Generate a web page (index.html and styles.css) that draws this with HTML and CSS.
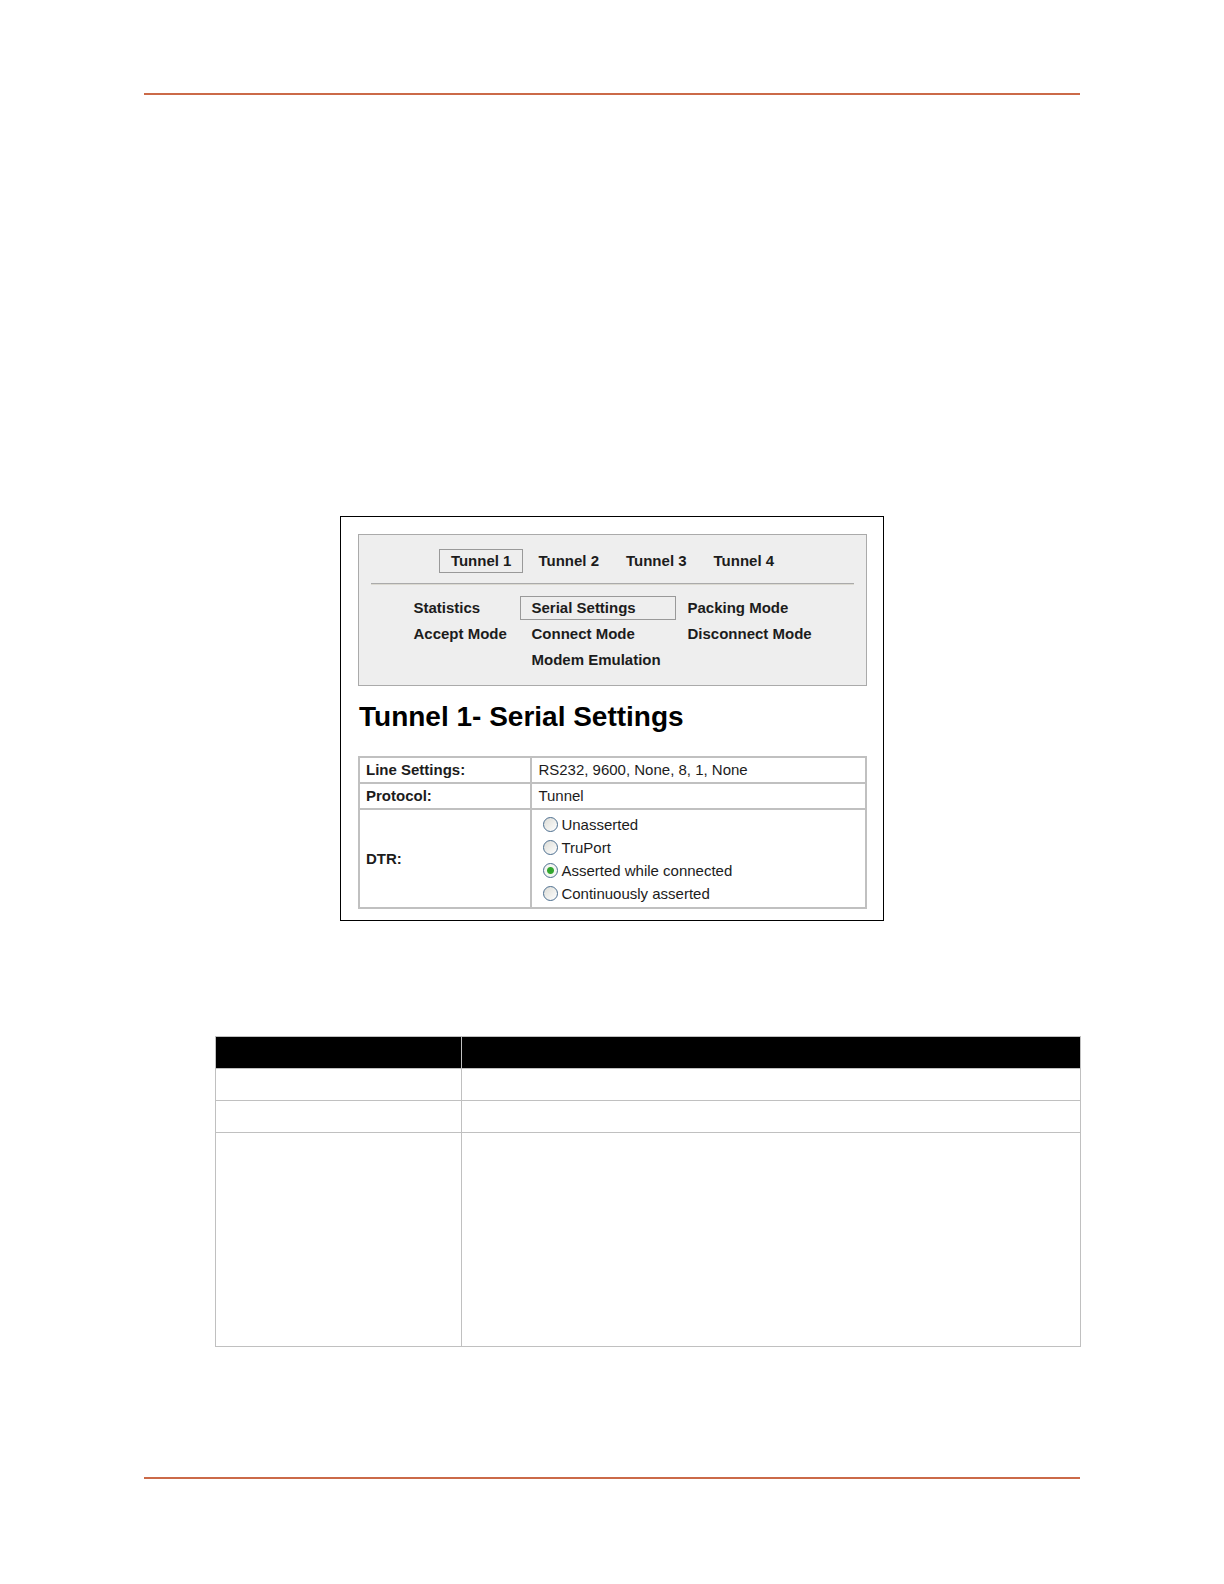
FILE: index.html
```
<!DOCTYPE html>
<html lang="en">
<head>
  <meta charset="UTF-8">
  <meta name="viewport" content="width=device-width, initial-scale=1.0">
  <title>Tunnel 1 - Serial Settings</title>
  <link rel="stylesheet" href="styles.css">
</head>
<body>
  <main class="page">
    <section class="screen">
      <nav class="menu">
        <div class="tunnels">
          <a class="active" href="#tunnel1">Tunnel 1</a>
          <a href="#tunnel2">Tunnel 2</a>
          <a href="#tunnel3">Tunnel 3</a>
          <a href="#tunnel4">Tunnel 4</a>
        </div>
        <hr>
        <div class="modes">
          <a href="#statistics">Statistics</a>
          <a class="active" href="#serial">Serial Settings</a>
          <a href="#packing">Packing Mode</a>
          <a href="#accept">Accept Mode</a>
          <a href="#connect">Connect Mode</a>
          <a href="#disconnect">Disconnect Mode</a>
          <a class="second" href="#modem">Modem Emulation</a>
        </div>
      </nav>

      <h1>Tunnel 1- Serial Settings</h1>

      <table class="settings">
        <tr>
          <th scope="row">Line Settings:</th>
          <td>RS232, 9600, None, 8, 1, None</td>
        </tr>
        <tr>
          <th scope="row">Protocol:</th>
          <td>Tunnel</td>
        </tr>
        <tr>
          <th scope="row" id="dtr">DTR:</th>
          <td>
            <div class="options" role="radiogroup" aria-labelledby="dtr">
              <label><input type="radio" name="dtr" value="unasserted">Unasserted</label>
              <label><input type="radio" name="dtr" value="truport">TruPort</label>
              <label><input type="radio" name="dtr" value="connected" checked>Asserted while connected</label>
              <label><input type="radio" name="dtr" value="continuous">Continuously asserted</label>
            </div>
          </td>
        </tr>
      </table>
    </section>

    <table class="description">
      <thead>
        <tr><th></th><th></th></tr>
      </thead>
      <tbody>
        <tr><td></td><td></td></tr>
        <tr><td></td><td></td></tr>
        <tr class="tall"><td></td><td></td></tr>
      </tbody>
    </table>
  </main>
</body>
</html>
```

FILE: styles.css
```
* {
  box-sizing: border-box;
}
body {
  margin: 0;
  background: #fff;
  color: #1c1c1c;
  font-family: "Liberation Sans", Arial, sans-serif;
  font-size: 15px;
}
.page {
  max-width: 936px;
  margin: 93px auto 105px;
  padding: 421px 0 130px;
  border-top: 2px solid #cb6a48;
  border-bottom: 2px solid #cb6a48;
}

/* device web page */
.screen {
  max-width: 544px;
  margin: 0 auto 115px;
  padding: 17px 16px 11px 17px;
  border: 1px solid #000;
}
.menu {
  padding: 14px 12px 13px;
  background: #eee;
  border: 1px solid #aaa;
}
.menu a {
  padding: 0 11px;
  border: 1px solid transparent;
  color: #1c1c1c;
  font-weight: bold;
  line-height: 22px;
  text-decoration: none;
  white-space: nowrap;
}
.menu .active {
  border-color: #999;
}
.tunnels {
  display: flex;
  justify-content: center;
  gap: 3px;
}
.menu hr {
  height: 2px;
  margin: 10px 0 11px;
  border: 0;
  border-top: 1px solid #aaa;
  border-bottom: 1px solid #dcdad2;
}
.modes {
  display: grid;
  grid-template-columns: 118px 156px 148px;
  justify-content: center;
  row-gap: 2px;
}
.modes .second {
  grid-column: 2;
}
h1 {
  margin: 16px 0 24px;
  padding-left: 1px;
  color: #000;
  font-size: 28px;
  line-height: 30px;
}

.settings {
  width: 100%;
  border-collapse: collapse;
}
.settings th,
.settings td {
  height: 26px;
  padding: 0 6px;
  border: 2px solid #c0c0c0;
  line-height: 22px;
  text-align: left;
}
.settings th {
  width: 34%;
}
.options {
  padding: 3px 5px 2px;
}
.options label {
  display: flex;
  align-items: center;
  gap: 3px;
  line-height: 23px;
}
.options input {
  appearance: none;
  width: 15px;
  height: 15px;
  margin: 0;
  border: 1px solid #4d6f90;
  border-radius: 50%;
  background: linear-gradient(135deg, #dcdcd6, #fff);
}
.options input:checked {
  background: radial-gradient(circle, #2fa32b 0, #35a831 3px, #f4f6f2 4px);
}

/* field descriptions */
.description {
  width: calc(100% - 70px);
  margin-left: 71px;
  border-collapse: collapse;
  table-layout: fixed;
}
.description th,
.description td {
  height: 32px;
  padding: 0;
  border: 1px solid #c0c0c0;
}
.description th {
  background: #000;
}
.description th:first-child {
  width: 246px;
}
.description .tall td {
  height: 214px;
}
```
